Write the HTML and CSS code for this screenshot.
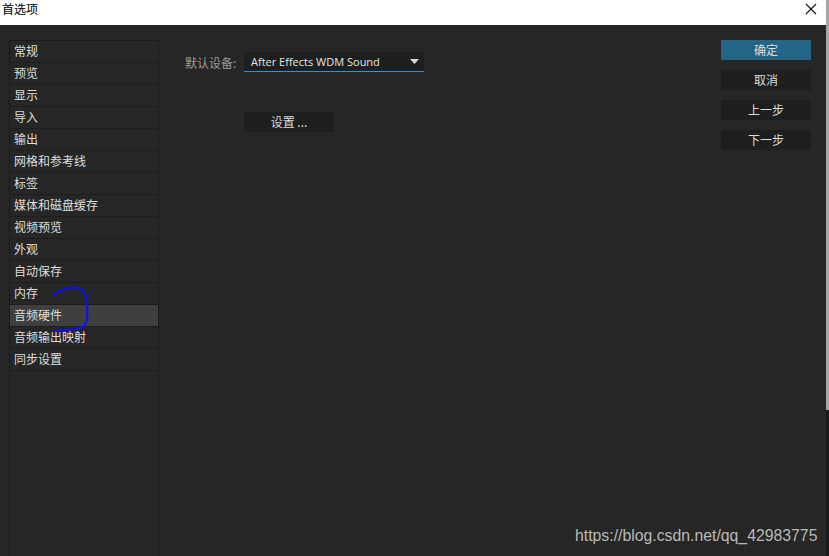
FILE: index.html
```html
<!DOCTYPE html>
<html lang="zh-CN">
<head>
<meta charset="utf-8">
<title>首选项</title>
<link rel="stylesheet" href="styles.css">
</head>
<body>
<div class="screen">
  <div class="app">
    <div class="titlebar">
      <span class="title">首选项</span>
      <svg class="close" width="12" height="12" viewBox="0 0 12 12"><path d="M1 1 L11 11 M11 1 L1 11" stroke="#111" stroke-width="1.1" fill="none"/></svg>
    </div>
    <div class="main">
      <ul class="sidebar">
        <li>常规</li>
        <li>预览</li>
        <li>显示</li>
        <li>导入</li>
        <li>输出</li>
        <li>网格和参考线</li>
        <li>标签</li>
        <li>媒体和磁盘缓存</li>
        <li>视频预览</li>
        <li>外观</li>
        <li>自动保存</li>
        <li>内存</li>
        <li class="selected">音频硬件</li>
        <li>音频输出映射</li>
        <li>同步设置</li>
      </ul>
      <div class="content">
        <div class="field">
          <span class="label">默认设备:</span>
          <div class="select">
            <span>After Effects WDM Sound</span>
            <svg class="caret" width="9" height="5" viewBox="0 0 9 5"><path d="M0 0 H9 L4.5 5 Z" fill="#d8d8d8"/></svg>
          </div>
        </div>
        <div class="btn setup">设置 ...</div>
      </div>
      <div class="actions">
        <div class="btn primary">确定</div>
        <div class="btn">取消</div>
        <div class="btn">上一步</div>
        <div class="btn">下一步</div>
      </div>
    </div>
  </div>
  <div class="strip"><div class="thumb"></div></div>
  <svg class="mark" width="60" height="60" viewBox="0 0 60 60"><path d="M13 15 C20 9 33 6 40 9 C47 13 48 38 44 45 C40 50 28 50 14 51" stroke="#0a14e8" stroke-width="2.2" fill="none" stroke-linecap="round"/></svg>
  <div class="watermark">https://blog.csdn.net/qq_42983775</div>
</div>
</body>
</html>
```
FILE: styles.css
```css
* { box-sizing: border-box; }
html, body { margin: 0; padding: 0; }
body {
  width: 829px;
  height: 556px;
  overflow: hidden;
  font-family: "Noto Sans CJK SC", "Noto Sans", sans-serif;
  font-size: 12px;
  color: #dcdcdc;
}
.screen {
  position: relative;
  display: flex;
  width: 829px;
  height: 556px;
}
.app {
  flex: 1;
  display: flex;
  flex-direction: column;
  background: #262626;
}
.titlebar {
  height: 25px;
  background: #ffffff;
  display: flex;
  align-items: center;
  justify-content: space-between;
  padding: 0 9px 8px 2px;
  color: #000;
}
.title { font-size: 12px; line-height: 14px; }
.close { display: block; margin-top: 0; }
.main {
  flex: 1;
  display: flex;
  padding-top: 15px;
  min-height: 0;
}
.sidebar {
  list-style: none;
  margin: 0 0 0 9px;
  padding: 0;
  width: 150px;
  border: 1px solid #1b1b1b;
  border-bottom: none;
}
.sidebar li {
  height: 22px;
  line-height: 19px;
  padding: 0 0 2px 4px;
  border-bottom: 1px solid #1e1e1e;
  color: #dedede;
}
.sidebar li.selected { background: #3f3f3f; }
.content {
  flex: 1;
  padding: 12px 0 0 26px;
}
.field {
  display: flex;
  align-items: center;
}
.label {
  width: 59px;
  color: #9a9a9a;
  line-height: 19px;
}
.select {
  width: 180px;
  height: 20px;
  background: #1e1e1e;
  border-bottom: 1px solid #3a8fc4;
  display: flex;
  align-items: center;
  justify-content: space-between;
  padding: 0 5px 0 7px;
  font-family: "Open Sans", "Noto Sans", sans-serif;
  font-size: 11px;
  color: #e4e4e4;
}
.caret { display: block; }
.btn {
  width: 90px;
  height: 20px;
  background: #1e1e1e;
  display: flex;
  align-items: center;
  justify-content: center;
  padding-bottom: 2px;
  color: #dcdcdc;
}
.setup { margin: 40px 0 0 59px; }
.actions {
  display: flex;
  flex-direction: column;
  gap: 10px;
  padding-right: 15px;
}
.btn.primary { background: #236487; }
.strip {
  width: 3px;
  background: #1b1b1b;
}
.thumb {
  height: 410px;
  background: #a6a6a6;
}
.mark {
  position: absolute;
  left: 41px;
  top: 280px;
}
.watermark {
  position: absolute;
  left: 575px;
  top: 527px;
  font-family: "Liberation Sans", Arial, sans-serif;
  font-size: 15.8px;
  color: #b9b9b9;
}
```
